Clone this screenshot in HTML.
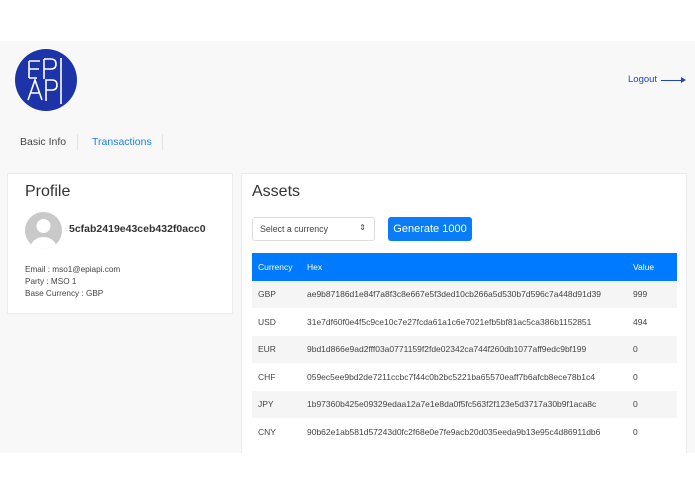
<!DOCTYPE html>
<html><head><style>
*{margin:0;padding:0;box-sizing:border-box}
body{width:695px;height:494px;background:#fff;font-family:"Liberation Sans",sans-serif;position:relative;overflow:hidden;color:#333}
.bg{position:absolute;left:0;top:41px;width:695px;height:412px;background:#f8f8f9;overflow:hidden}
.abs{position:absolute}
.card{position:absolute;background:#fff;border:1px solid #ececec}
.tbl{position:absolute;left:11px;top:79px;width:425px;border-collapse:collapse;font-size:8.5px;color:#444}
.tbl td,.tbl th{height:27.5px;padding:0 0 0 6px;text-align:left;font-weight:normal;white-space:nowrap}
.tbl th{background:#007bff;color:#fff}
.tbl tr.s td{background:#f5f5f5}
</style></head><body>
<div class="bg">
 <svg class="abs" style="left:15px;top:8px" width="62" height="62" viewBox="0 0 62 62">
  <circle cx="31" cy="31" r="31" fill="#1c34a8"/>
  <g stroke="#fff" stroke-width="1.6" fill="none">
   <path d="M14 12h11M14 12v17M14 20h10M14 29h8"/>
   <path d="M29 10v20M29 10h7q5 0 5 5q0 5 -5 5h-7"/>
   <path d="M46 9v46"/>
   <path d="M13 51l7 -20l7 20M16 44h8"/>
   <path d="M31 52v-21h6q5 0 5 5q0 5 -5 5h-6"/>
  </g>
 </svg>
 <div class="abs" style="left:628px;top:33px;font-size:9.5px;color:#2244cc">Logout</div>
 <div class="abs" style="left:661px;top:38.5px;width:22px;height:1.5px;background:#2244cc"></div>
 <div class="abs" style="left:681px;top:36px;border-left:5px solid #2244cc;border-top:3px solid transparent;border-bottom:3px solid transparent"></div>
 <div class="abs" style="left:20px;top:95px;font-size:10.5px;color:#444">Basic Info</div>
 <div class="abs" style="left:77px;top:93px;width:1px;height:16px;background:#e4e4e4"></div>
 <div class="abs" style="left:92px;top:95px;font-size:10.5px;color:#1a7fe8">Transactions</div>
 <div class="abs" style="left:162px;top:93px;width:1px;height:16px;background:#e4e4e4"></div>

 <div class="card" style="left:7px;top:132px;width:226px;height:141px">
  <div class="abs" style="left:17px;top:9px;font-size:16px;color:#333">Profile</div>
  <svg class="abs" style="left:17px;top:38px" width="37" height="37" viewBox="0 0 37 37">
   <defs><clipPath id="c"><circle cx="18.5" cy="18.5" r="18.5"/></clipPath></defs>
   <circle cx="18.5" cy="18.5" r="18.5" fill="#c9c9c9"/>
   <g clip-path="url(#c)" fill="#fff"><circle cx="18.5" cy="14" r="7"/><ellipse cx="18.5" cy="36" rx="13" ry="11"/></g>
  </svg>
  <div class="abs" style="left:61px;top:49px;font-size:10.5px;font-weight:bold;color:#333">5cfab2419e43ceb432f0acc0</div>
  <div class="abs" style="left:17px;top:90px;font-size:8.2px;line-height:12px;color:#444">Email : mso1@epiapi.com<br>Party : MSO 1<br>Base Currency : GBP</div>
 </div>

 <div class="card" style="left:241px;top:132px;width:446px;height:300px">
  <div class="abs" style="left:10px;top:9px;font-size:16px;color:#333">Assets</div>
  <div class="abs" style="left:10px;top:43px;width:123px;height:24px;border:1px solid #ddd;border-radius:3px;font-size:8.8px;color:#444;padding:6px 0 0 7px">Select a currency<span style="position:absolute;right:8px;top:5px;font-size:8px">⇕</span></div>
  <div class="abs" style="left:146px;top:43px;width:84px;height:24px;background:#0a7cf6;border-radius:3px;font-size:11px;color:#fff;text-align:center;line-height:24px">Generate 1000</div>
  <table class="tbl" style="width:425px;left:10px">
   <tr><th style="width:49px">Currency</th><th style="font-size:8.5px">Hex</th><th style="width:50px">Value</th></tr>
   <tr class="s"><td>GBP</td><td>ae9b87186d1e84f7a8f3c8e667e5f3ded10cb266a5d530b7d596c7a448d91d39</td><td>999</td></tr>
   <tr><td>USD</td><td>31e7df60f0e4f5c9ce10c7e27fcda61a1c6e7021efb5bf81ac5ca386b1152851</td><td>494</td></tr>
   <tr class="s"><td>EUR</td><td>9bd1d866e9ad2fff03a0771159f2fde02342ca744f260db1077aff9edc9bf199</td><td>0</td></tr>
   <tr><td>CHF</td><td>059ec5ee9bd2de7211ccbc7f44c0b2bc5221ba65570eaff7b6afcb8ece78b1c4</td><td>0</td></tr>
   <tr class="s"><td>JPY</td><td>1b97360b425e09329edaa12a7e1e8da0f5fc563f2f123e5d3717a30b9f1aca8c</td><td>0</td></tr>
   <tr><td>CNY</td><td>90b62e1ab581d57243d0fc2f68e0e7fe9acb20d035eeda9b13e95c4d86911db6</td><td>0</td></tr>
  </table>
 </div>
</div>
</body></html>
